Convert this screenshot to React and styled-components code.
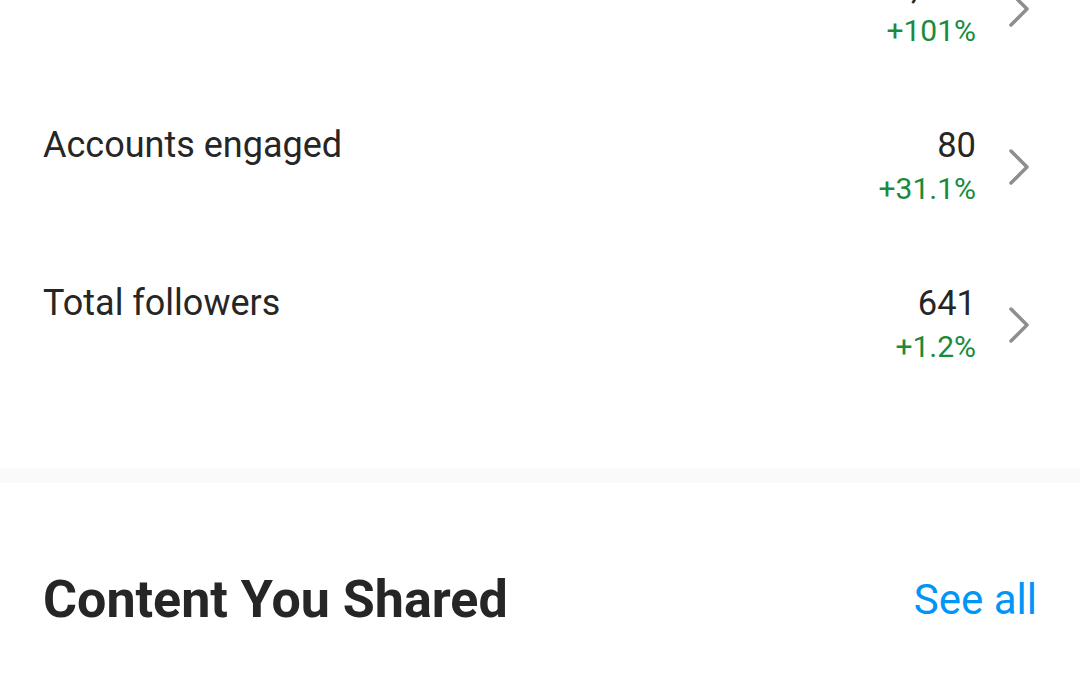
import React from 'react'
import styled, { createGlobalStyle } from 'styled-components'

const Global = createGlobalStyle`
  html, body {
    margin: 0;
    padding: 0;
    background: #fff;
  }
  body {
    font-family: Roboto, "Noto Sans", "Liberation Sans", sans-serif;
    color: #262626;
  }
`

const Screen = styled.div`
  width: 1080px;
  height: 675px;
  overflow: hidden;
  background: #fff;
`

// list is scrolled, so its first row is partly above the top edge
const List = styled.div`
  margin-top: -35px;
  display: flex;
  flex-direction: column;
`

const Row = styled.div`
  height: 158px;
  display: flex;
  justify-content: space-between;
  align-items: flex-start;
  padding: 0 50px 0 43px;
  box-sizing: border-box;
`

const Label = styled.div`
  font-size: 36px;
  line-height: 44px;
  color: #262626;
`

const Right = styled.div`
  display: flex;
  align-items: center;
  gap: 32px;
`

const Stats = styled.div`
  display: flex;
  flex-direction: column;
  align-items: flex-end;
`

const Value = styled.div`
  font-size: 34.5px;
  line-height: 44px;
  color: #262626;
`

const Change = styled.div`
  font-size: 30px;
  line-height: 44px;
  color: #1b8a3a;
`

const Chevron = styled.svg`
  width: 22px;
  height: 38px;
  display: block;
`

const Divider = styled.div`
  height: 15px;
  margin-top: 29px;
  background: #fafafa;
`

const Section = styled.div`
  padding: 87px 43px 0 43px;
  display: flex;
  justify-content: space-between;
  align-items: center;
`

const Heading = styled.h2`
  margin: 0;
  font-size: 52px;
  line-height: 60px;
  font-weight: 700;
  color: #262626;
`

const SeeAll = styled.a`
  font-size: 42px;
  line-height: 60px;
  color: #0095f6;
  text-decoration: none;
`

const rows = [
  { label: 'Accounts reached', value: '4,218', change: '+101%' },
  { label: 'Accounts engaged', value: '80', change: '+31.1%' },
  { label: 'Total followers', value: '641', change: '+1.2%' },
]

export default function App() {
  return (
    <Screen>
      <Global />
      <List>
        {rows.map((r) => (
          <Row key={r.label}>
            <Label>{r.label}</Label>
            <Right>
              <Stats>
                <Value>{r.value}</Value>
                <Change>{r.change}</Change>
              </Stats>
              <Chevron viewBox="0 0 22 38">
                <path d="M3 3 L19 19 L3 35" fill="none" stroke="#8e8e8e" strokeWidth="3.5" strokeLinecap="round" strokeLinejoin="round" />
              </Chevron>
            </Right>
          </Row>
        ))}
      </List>
      <Divider />
      <Section>
        <Heading>Content You Shared</Heading>
        <SeeAll href="#">See all</SeeAll>
      </Section>
    </Screen>
  )
}
